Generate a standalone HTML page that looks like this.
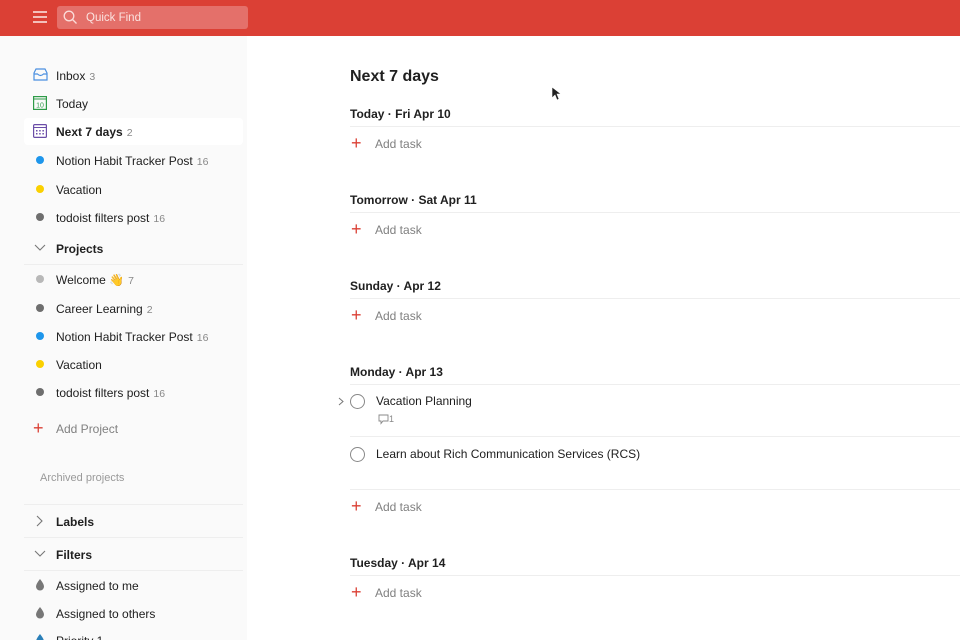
<!DOCTYPE html>
<html style="width:960px;height:640px;overflow:hidden"><head><style>
*{margin:0;padding:0;box-sizing:border-box}
body{width:960px;height:640px;overflow:hidden;background:#fff;font-family:"Liberation Sans",sans-serif;color:#202020;position:relative;font-size:12px}
.a{position:absolute;white-space:nowrap}
#top{position:absolute;left:0;top:0;width:960px;height:36px;background:#db4035}
#side{position:absolute;left:0;top:36px;width:247px;height:604px;background:#fafafa}
.t{line-height:16px;transform:translateY(-7px)}
.c{color:#888;font-size:10.5px;margin-left:4px}
.dot{position:absolute;width:8px;height:8px;border-radius:50%;left:36px}
.ln{position:absolute;height:1px;background:#eee}
.h{font-weight:bold;font-size:12px}
.plus{position:absolute;color:#db4035;font-size:18px;line-height:16px;font-weight:300}
.add{color:#808080}
</style></head><body>
<div id="top"></div>
<div class="a" style="left:33px;top:11px;width:14px;height:2px;background:#f4c0bb"></div>
<div class="a" style="left:33px;top:16px;width:14px;height:2px;background:#f4c0bb"></div>
<div class="a" style="left:33px;top:21px;width:14px;height:2px;background:#f4c0bb"></div>
<div class="a" style="left:57px;top:6px;width:191px;height:23px;background:#e4706a;border-radius:3px"></div>
<svg class="a" style="left:63px;top:10px" width="15" height="15"><circle cx="6" cy="6" r="4.8" fill="none" stroke="#fbdcd9" stroke-width="1.3"/><line x1="9.5" y1="9.5" x2="13.5" y2="13.5" stroke="#fbdcd9" stroke-width="1.3"/></svg>
<div class="a" style="left:86px;top:12px;color:#fbe2df;font-size:11.5px">Quick Find</div>
<div id="side"></div>
<div class="a" style="left:24px;top:118px;width:219px;height:27px;background:#fff;border-radius:4px"></div>
<svg class="a" style="left:33px;top:68px" width="15" height="14"><path d="M1 5 L3 1 H12 L14 5 V12 H1 Z M1 6 H4.5 Q7.5 9 10.5 6 H14" fill="none" stroke="#4a8fe0" stroke-width="1.2"/></svg>
<svg class="a" style="left:33px;top:96px" width="14" height="14"><rect x="0.6" y="0.6" width="12.8" height="12.8" fill="none" stroke="#2e9b48" stroke-width="1.2"/><line x1="0.6" y1="3" x2="13.4" y2="3" stroke="#2e9b48"/><text x="7" y="11.5" font-size="7" text-anchor="middle" fill="#2e9b48" font-family="Liberation Sans">10</text></svg>
<svg class="a" style="left:33px;top:124px" width="14" height="14"><rect x="0.6" y="0.6" width="12.8" height="12.8" rx="1" fill="none" stroke="#6b4ea8" stroke-width="1.2"/><line x1="0.6" y1="3.5" x2="13.4" y2="3.5" stroke="#6b4ea8"/><g fill="#6b4ea8"><rect x="3" y="6" width="1.5" height="1.5"/><rect x="6.2" y="6" width="1.5" height="1.5"/><rect x="9.4" y="6" width="1.5" height="1.5"/><rect x="3" y="9" width="1.5" height="1.5"/><rect x="6.2" y="9" width="1.5" height="1.5"/><rect x="9.4" y="9" width="1.5" height="1.5"/></g></svg>
<div class="a t" style="left:56px;top:75px">Inbox<span class="c">3</span></div>
<div class="a t" style="left:56px;top:103px">Today</div>
<div class="a t" style="left:56px;top:131px;font-weight:bold">Next 7 days<span class="c" style="font-weight:normal">2</span></div>
<div class="dot" style="top:156px;background:#1e96eb"></div>
<div class="a t" style="left:56px;top:160px">Notion Habit Tracker Post<span class="c">16</span></div>
<div class="dot" style="top:185px;background:#fad000"></div>
<div class="a t" style="left:56px;top:189px">Vacation</div>
<div class="dot" style="top:213px;background:#6e6e6e"></div>
<div class="a t" style="left:56px;top:217px">todoist filters post<span class="c">16</span></div>
<svg class="a" style="left:34px;top:244px" width="12" height="8"><path d="M1 1 L6 6 L11 1" fill="none" stroke="#777" stroke-width="1.1"/></svg>
<div class="a t h" style="left:56px;top:248px">Projects</div>
<div class="ln" style="left:24px;top:264px;width:219px"></div>
<div class="dot" style="top:275px;background:#b8b8b8"></div>
<div class="a t" style="left:56px;top:279px">Welcome 👋<span class="c">7</span></div>
<div class="dot" style="top:304px;background:#6e6e6e"></div>
<div class="a t" style="left:56px;top:308px">Career Learning<span class="c">2</span></div>
<div class="dot" style="top:332px;background:#1e96eb"></div>
<div class="a t" style="left:56px;top:336px">Notion Habit Tracker Post<span class="c">16</span></div>
<div class="dot" style="top:360px;background:#fad000"></div>
<div class="a t" style="left:56px;top:364px">Vacation</div>
<div class="dot" style="top:388px;background:#6e6e6e"></div>
<div class="a t" style="left:56px;top:392px">todoist filters post<span class="c">16</span></div>
<div class="plus" style="left:33px;top:420px">+</div>
<div class="a t add" style="left:56px;top:428px">Add Project</div>
<div class="a t" style="left:40px;top:477px;color:#999;font-size:11px">Archived projects</div>
<div class="ln" style="left:24px;top:504px;width:219px"></div>
<svg class="a" style="left:36px;top:515px" width="8" height="12"><path d="M1 1 L6 6 L1 11" fill="none" stroke="#777" stroke-width="1.1"/></svg>
<div class="a t h" style="left:56px;top:521px">Labels</div>
<div class="ln" style="left:24px;top:537px;width:219px"></div>
<svg class="a" style="left:34px;top:550px" width="12" height="8"><path d="M1 1 L6 6 L11 1" fill="none" stroke="#777" stroke-width="1.1"/></svg>
<div class="a t h" style="left:56px;top:554px">Filters</div>
<div class="ln" style="left:24px;top:570px;width:219px"></div>
<svg class="a" style="left:35px;top:578px" width="10" height="13"><path d="M5 1 Q9 6 9 8.5 A4 4 0 0 1 1 8.5 Q1 6 5 1Z" fill="#777"/></svg>
<div class="a t" style="left:56px;top:585px">Assigned to me</div>
<svg class="a" style="left:35px;top:606px" width="10" height="13"><path d="M5 1 Q9 6 9 8.5 A4 4 0 0 1 1 8.5 Q1 6 5 1Z" fill="#777"/></svg>
<div class="a t" style="left:56px;top:613px">Assigned to others</div>
<svg class="a" style="left:35px;top:633px" width="10" height="7"><path d="M5 1 Q9 6 9 8.5 A4 4 0 0 1 1 8.5 Q1 6 5 1Z" fill="#2a7fb8"/></svg>
<div class="a" style="left:56px;top:633px;height:7px;overflow:hidden;line-height:16px">Priority 1</div>

<div class="a" style="left:350px;top:68px;font-size:16px;font-weight:bold">Next 7 days</div>
<svg class="a" style="left:551px;top:86px" width="10" height="15"><path d="M1 1 V12 L4 9 L6 14 L8 13 L6 8 H10 Z" fill="#222" stroke="#fff" stroke-width=".6"/></svg>

<div class="a t h" style="left:350px;top:113px">Today · Fri Apr 10</div>
<div class="ln" style="left:350px;top:126px;width:610px"></div>
<div class="plus" style="left:351px;top:135px">+</div><div class="a t add" style="left:375px;top:143px">Add task</div>

<div class="a t h" style="left:350px;top:199px">Tomorrow · Sat Apr 11</div>
<div class="ln" style="left:350px;top:212px;width:610px"></div>
<div class="plus" style="left:351px;top:221px">+</div><div class="a t add" style="left:375px;top:229px">Add task</div>

<div class="a t h" style="left:350px;top:285px">Sunday · Apr 12</div>
<div class="ln" style="left:350px;top:298px;width:610px"></div>
<div class="plus" style="left:351px;top:307px">+</div><div class="a t add" style="left:375px;top:315px">Add task</div>

<div class="a t h" style="left:350px;top:371px">Monday · Apr 13</div>
<div class="ln" style="left:350px;top:384px;width:610px"></div>
<svg class="a" style="left:338px;top:397px" width="6" height="9"><path d="M1 1 L5 4.5 L1 8" fill="none" stroke="#777"/></svg>
<div class="a" style="left:350px;top:394px;width:15px;height:15px;border:1px solid #888;border-radius:50%"></div>
<div class="a t" style="left:376px;top:400px">Vacation Planning</div>
<svg class="a" style="left:378px;top:414px" width="11" height="11"><path d="M1 1 H10 V7 H5 L3 9.5 V7 H1 Z" fill="none" stroke="#888" stroke-width=".9"/></svg>
<div class="a" style="left:389px;top:414px;font-size:9px;color:#888">1</div>
<div class="ln" style="left:350px;top:436px;width:610px"></div>
<div class="a" style="left:350px;top:447px;width:15px;height:15px;border:1px solid #888;border-radius:50%"></div>
<div class="a t" style="left:376px;top:453px">Learn about Rich Communication Services (RCS)</div>
<div class="ln" style="left:350px;top:489px;width:610px"></div>
<div class="plus" style="left:351px;top:498px">+</div><div class="a t add" style="left:375px;top:506px">Add task</div>

<div class="a t h" style="left:350px;top:562px">Tuesday · Apr 14</div>
<div class="ln" style="left:350px;top:575px;width:610px"></div>
<div class="plus" style="left:351px;top:584px">+</div><div class="a t add" style="left:375px;top:592px">Add task</div>
</body></html>
